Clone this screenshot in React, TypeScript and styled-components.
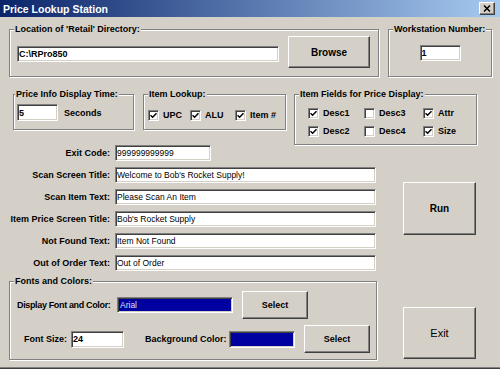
import React from "react";
import styled, { createGlobalStyle } from "styled-components";

const GlobalStyle = createGlobalStyle`
    html, body {
        margin: 0;
        padding: 0;
        background: #d4d0c8;
    }
    body {
        font-family: "Liberation Sans", Arial, sans-serif;
        color: #000;
    }
`;

const raised = `
    border: 1px solid;
    border-color: #ffffff #404040 #404040 #ffffff;
    box-shadow: inset -1px -1px 0 #808080, inset 1px 1px 0 #d4d0c8;
`;

const sunken = `
    border: 1px solid;
    border-color: #808080 #ffffff #ffffff #808080;
    box-shadow: inset 1px 1px 0 #404040, inset -1px -1px 0 #d4d0c8;
`;

const Window = styled.div`
    width: 500px;
    height: 369px;
    box-sizing: border-box;
    background: #d4d0c8;
    border-bottom: 1px solid #404040;
    box-shadow: inset 0 -1px 0 #808080;
    display: flex;
    flex-direction: column;
    overflow: hidden;
`;

const TitleBar = styled.div`
    height: 17px;
    flex: none;
    display: flex;
    align-items: center;
    justify-content: space-between;
    padding: 0 5px 0 3px;
    background: linear-gradient(to right, #0a246a, #a6caf0);
`;

const Title = styled.span`
    color: #fff;
    font-size: 10.5px;
    font-weight: bold;
    white-space: nowrap;
`;

const CloseButton = styled.span`
    width: 16px;
    height: 13px;
    box-sizing: border-box;
    background: #d4d0c8;
    ${raised}
    display: flex;
    align-items: center;
    justify-content: center;
`;

const Body = styled.div`
    padding-left: 9px;
    display: flex;
    flex-direction: column;
`;

const TopRow = styled.div`
    margin-top: 12px;
    display: flex;
    align-items: flex-start;
    gap: 9px;
`;

const SecondRow = styled.div`
    margin: 17px 0 0 4px;
    display: flex;
    align-items: flex-start;
`;

const Group = styled.div<{ $w: number; $h: number; $gap?: number; $top?: number }>`
    width: ${p => p.$w}px;
    height: ${p => p.$h}px;
    margin-left: ${p => p.$gap ?? 0}px;
    margin-top: ${p => p.$top ?? 0}px;
    box-sizing: border-box;
    border: 1px solid #808080;
    box-shadow: inset 1px 1px 0 #fff, 1px 1px 0 #fff;
    display: flex;
    flex-direction: column;
    flex: none;
`;

const Legend = styled.span<{ $inset?: number }>`
    align-self: flex-start;
    margin: -6px 0 0 ${p => p.$inset ?? 4}px;
    padding: 0 1px;
    height: 11px;
    line-height: 11px;
    background: #d4d0c8;
    font-size: 9px;
    font-weight: bold;
    white-space: nowrap;
`;

const Field = styled.input<{ $w: number; $h?: number; $bold?: boolean }>`
    width: ${p => p.$w}px;
    height: ${p => p.$h ?? 16}px;
    box-sizing: border-box;
    margin: 0;
    padding: 0 1px;
    ${sunken}
    background: #fff;
    color: #000;
    font-family: "Liberation Sans", Arial, sans-serif;
    font-size: ${p => (p.$bold ? 9 : 8.5)}px;
    font-weight: ${p => (p.$bold ? "bold" : "normal")};
    outline: none;
    flex: none;
`;

const Button = styled.button<{ $w: number; $h: number; $size?: number; $thin?: boolean }>`
    width: ${p => p.$w}px;
    height: ${p => p.$h}px;
    box-sizing: border-box;
    margin: 0;
    padding: 0;
    background: #d4d0c8;
    ${raised}
    color: #000;
    font-family: "Liberation Sans", Arial, sans-serif;
    font-size: ${p => p.$size ?? 9}px;
    font-weight: ${p => (p.$thin ? "normal" : "bold")};
    flex: none;
`;

const Text = styled.span`
    font-size: 9px;
    font-weight: bold;
    white-space: nowrap;
`;

const PathRow = styled.div`
    display: flex;
    align-items: flex-start;
    gap: 9px;
    padding: 1px 0 0 7px;

    & > input {
        margin-top: 10px;
    }
`;

const CenteredField = styled.div`
    display: flex;
    justify-content: center;
    margin-top: 10px;
`;

const SecondsRow = styled.div`
    display: flex;
    align-items: center;
    gap: 6px;
    margin-top: 4px;
    padding-left: 3px;
`;

const CheckGrid = styled.div<{ $cols: string; $top: number; $left: number }>`
    display: grid;
    grid-template-columns: ${p => p.$cols};
    grid-auto-rows: 12px;
    row-gap: 6px;
    margin-top: ${p => p.$top}px;
    padding-left: ${p => p.$left}px;
`;

const CheckItem = styled.label`
    display: flex;
    align-items: center;
    gap: 4px;
    font-size: 9px;
    font-weight: bold;
    white-space: nowrap;
`;

const Box = styled.span`
    width: 11px;
    height: 11px;
    box-sizing: border-box;
    ${sunken}
    background: #fff;
    display: flex;
    align-items: center;
    justify-content: center;
    flex: none;
`;

const Lower = styled.div`
    display: grid;
    grid-template-columns: 368px 73px;
    column-gap: 26px;
`;

const LeftColumn = styled.div`
    display: flex;
    flex-direction: column;
`;

const FormGrid = styled.div`
    display: grid;
    grid-template-columns: 101px auto;
    grid-auto-rows: 16px;
    column-gap: 5px;
    row-gap: 6px;
    align-items: center;
    justify-items: start;
`;

const FormLabel = styled.span`
    justify-self: end;
    font-size: 9px;
    font-weight: bold;
    white-space: nowrap;
`;

const FontsRow = styled.div<{ $top: number; $left: number }>`
    display: flex;
    align-items: center;
    margin-top: ${p => p.$top}px;
    padding-left: ${p => p.$left}px;
`;

const FixedLabel = styled.span<{ $w: number; $squeeze?: number }>`
    width: ${p => p.$w}px;
    flex: none;
    font-size: 9px;
    font-weight: bold;
    white-space: nowrap;
    letter-spacing: ${p => p.$squeeze ?? 0}px;
`;

const Swatch = styled.div<{ $w: number; $h: number }>`
    width: ${p => p.$w}px;
    height: ${p => p.$h}px;
    box-sizing: border-box;
    ${sunken}
    background: #0000a0;
    color: #dce2ff;
    font-size: 8.5px;
    line-height: 14px;
    padding-left: 2px;
    flex: none;
`;

const Spacer = styled.span<{ $w: number }>`
    width: ${p => p.$w}px;
    flex: none;
`;

const RightColumn = styled.div`
    display: flex;
    flex-direction: column;
    padding-top: 37px;
    gap: 72px;
`;

const Check = () => (
    <Box>
        <svg width="7" height="7" viewBox="0 0 7 7">
            <polyline points="0.5,3.2 2.6,5.3 6.5,1.2" fill="none" stroke="#000" strokeWidth="1.5" />
        </svg>
    </Box>
);

const CheckOption: React.FC<{ label: string; checked?: boolean }> = ({ label, checked }) => (
    <CheckItem>
        {checked ? <Check /> : <Box />}
        {label}
    </CheckItem>
);

const rows: { label: string; value: string; w: number }[] = [
    { label: "Exit Code:", value: "999999999999", w: 96 },
    { label: "Scan Screen Title:", value: "Welcome to Bob's Rocket Supply!", w: 261 },
    { label: "Scan Item Text:", value: "Please Scan An Item", w: 261 },
    { label: "Item Price Screen Title:", value: "Bob's Rocket Supply", w: 261 },
    { label: "Not Found Text:", value: "Item Not Found", w: 261 },
    { label: "Out of Order Text:", value: "Out of Order", w: 261 },
];

export default function App() {
    return (
        <Window>
            <GlobalStyle />
            <TitleBar>
                <Title>Price Lookup Station</Title>
                <CloseButton>
                    <svg width="8" height="7" viewBox="0 0 8 7">
                        <path d="M1 0.5 L7 6.5 M7 0.5 L1 6.5" stroke="#000" strokeWidth="1.5" />
                    </svg>
                </CloseButton>
            </TitleBar>
            <Body>
                <TopRow>
                    <Group $w={370} $h={48}>
                        <Legend>Location of 'Retail' Directory:</Legend>
                        <PathRow>
                            <Field $w={262} $bold readOnly value="C:\RPro850" />
                            <Button $w={82} $h={32} $size={10}>Browse</Button>
                        </PathRow>
                    </Group>
                    <Group $w={104} $h={48}>
                        <Legend>Workstation Number:</Legend>
                        <CenteredField>
                            <Field $w={41} $bold readOnly value="1" />
                        </CenteredField>
                    </Group>
                </TopRow>

                <SecondRow>
                    <Group $w={121} $h={36}>
                        <Legend $inset={1}>Price Info Display Time:</Legend>
                        <SecondsRow>
                            <Field $w={41} $h={17} $bold readOnly value="5" />
                            <Text>Seconds</Text>
                        </SecondsRow>
                    </Group>
                    <Group $w={143} $h={36} $gap={9}>
                        <Legend>Item Lookup:</Legend>
                        <CheckGrid $cols="42px 45px auto" $top={9} $left={4}>
                            <CheckOption label="UPC" checked />
                            <CheckOption label="ALU" checked />
                            <CheckOption label="Item #" checked />
                        </CheckGrid>
                    </Group>
                    <Group $w={183} $h={51} $gap={8}>
                        <Legend>Item Fields for Price Display:</Legend>
                        <CheckGrid $cols="56px 59px auto" $top={7} $left={13}>
                            <CheckOption label="Desc1" checked />
                            <CheckOption label="Desc3" />
                            <CheckOption label="Attr" checked />
                            <CheckOption label="Desc2" checked />
                            <CheckOption label="Desc4" />
                            <CheckOption label="Size" checked />
                        </CheckGrid>
                    </Group>
                </SecondRow>

                <Lower>
                    <LeftColumn>
                        <FormGrid>
                            {rows.map(r => (
                                <React.Fragment key={r.label}>
                                    <FormLabel>{r.label}</FormLabel>
                                    <Field $w={r.w} readOnly value={r.value} />
                                </React.Fragment>
                            ))}
                        </FormGrid>
                        <Group $w={368} $h={79} $top={10}>
                            <Legend>Fonts and Colors:</Legend>
                            <FontsRow $top={4} $left={7}>
                                <FixedLabel $w={100} $squeeze={-0.35}>Display Font and Color:</FixedLabel>
                                <Swatch $w={116} $h={16}>Arial</Swatch>
                                <Spacer $w={9} />
                                <Button $w={66} $h={28}>Select</Button>
                            </FontsRow>
                            <FontsRow $top={6} $left={14}>
                                <FixedLabel $w={47}>Font Size:</FixedLabel>
                                <Field $w={53} $h={17} $bold readOnly value="24" />
                                <Spacer $w={21} />
                                <FixedLabel $w={84}>Background Color:</FixedLabel>
                                <Swatch $w={66} $h={17} />
                                <Spacer $w={9} />
                                <Button $w={66} $h={28}>Select</Button>
                            </FontsRow>
                        </Group>
                    </LeftColumn>
                    <RightColumn>
                        <Button $w={73} $h={53} $size={10}>Run</Button>
                        <Button $w={73} $h={52} $size={11} $thin>Exit</Button>
                    </RightColumn>
                </Lower>
            </Body>
        </Window>
    );
}
